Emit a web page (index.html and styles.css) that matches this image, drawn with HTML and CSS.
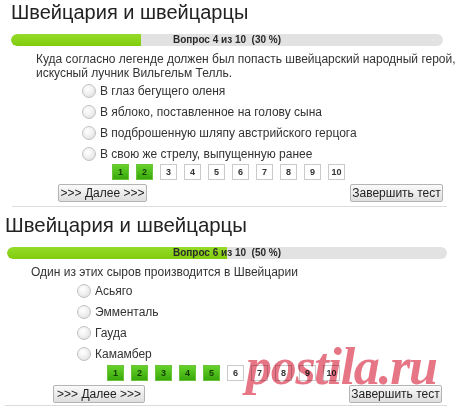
FILE: index.html
```html
<!DOCTYPE html>
<html lang="ru">
<head>
<meta charset="utf-8">
<title>Швейцария и швейцарцы</title>
<link rel="stylesheet" href="styles.css">
</head>
<body>
<div class="page">
  <section class="quiz quiz-a">
    <h1 class="quiz-title">Швейцария и швейцарцы</h1>
    <div class="bar">
      <div class="bar-fill" style="width:30%"></div>
      <div class="bar-label">Вопрос 4 из 10&nbsp;&nbsp;(30 %)</div>
    </div>
    <p class="question">Куда согласно легенде должен был попасть швейцарский народный герой,<br>искусный лучник Вильгельм Телль.</p>
    <ul class="options">
      <li class="option"><span class="radio"></span><span>В глаз бегущего оленя</span></li>
      <li class="option"><span class="radio"></span><span>В яблоко, поставленное на голову сына</span></li>
      <li class="option"><span class="radio"></span><span>В подброшенную шляпу австрийского герцога</span></li>
      <li class="option"><span class="radio"></span><span>В свою же стрелу, выпущенную ранее</span></li>
    </ul>
    <div class="pages">
      <span class="pg done">1</span><span class="pg done">2</span><span class="pg">3</span><span class="pg">4</span><span class="pg">5</span><span class="pg">6</span><span class="pg">7</span><span class="pg">8</span><span class="pg">9</span><span class="pg">10</span>
    </div>
    <div class="actions">
      <button class="btn btn-next">&gt;&gt;&gt; Далее &gt;&gt;&gt;</button>
      <button class="btn btn-finish">Завершить тест</button>
    </div>
    <div class="sep"></div>
  </section>

  <section class="quiz quiz-b">
    <h1 class="quiz-title">Швейцария и швейцарцы</h1>
    <div class="bar">
      <div class="bar-fill" style="width:50%"></div>
      <div class="bar-label">Вопрос 6 из 10&nbsp;&nbsp;(50 %)</div>
    </div>
    <p class="question">Один из этих сыров производится в Швейцарии</p>
    <ul class="options">
      <li class="option"><span class="radio"></span><span>Асьяго</span></li>
      <li class="option"><span class="radio"></span><span>Эмменталь</span></li>
      <li class="option"><span class="radio"></span><span>Гауда</span></li>
      <li class="option"><span class="radio"></span><span>Камамбер</span></li>
    </ul>
    <div class="pages">
      <span class="pg done">1</span><span class="pg done">2</span><span class="pg done">3</span><span class="pg done">4</span><span class="pg done">5</span><span class="pg">6</span><span class="pg">7</span><span class="pg">8</span><span class="pg">9</span><span class="pg">10</span>
    </div>
    <div class="actions">
      <button class="btn btn-next">&gt;&gt;&gt; Далее &gt;&gt;&gt;</button>
      <button class="btn btn-finish">Завершить тест</button>
    </div>
    <div class="sep"></div>
  </section>

  <div class="watermark">postila.ru</div>
</div>
</body>
</html>
```

FILE: styles.css
```css
* { box-sizing: border-box; }
html, body { margin: 0; padding: 0; background: #fff; }
body {
  font-family: "Liberation Sans", Arial, sans-serif;
  color: #333;
  width: 460px;
  height: 408px;
  overflow: hidden;
}
.page { position: relative; width: 460px; height: 408px; background: #fff; }

.quiz-title {
  margin: 0;
  font-weight: normal;
  font-size: 20px;
  line-height: 24px;
  color: #222;
}
.bar {
  position: relative;
  height: 12px;
  border-radius: 6px;
  background: #e2e2e2;
  overflow: hidden;
}
.bar-fill {
  height: 100%;
  background: linear-gradient(#95db2a, #80cc0c);
  border-radius: 6px 0 0 6px;
}
.bar-label {
  position: absolute;
  inset: 0;
  text-align: center;
  font-size: 10px;
  font-weight: bold;
  line-height: 12px;
  color: #2a2a2a;
}
.question {
  margin: 0;
  font-size: 12px;
  line-height: 14px;
  color: #333;
}
.options { list-style: none; margin: 0; padding: 0; }
.option {
  display: flex;
  align-items: center;
  gap: 4px;
  height: 21px;
  font-size: 12px;
  color: #333;
}
.radio {
  width: 14px;
  height: 14px;
  border-radius: 50%;
  border: 1px solid #c2c2c2;
  background: radial-gradient(circle at 40% 35%, #ffffff 0%, #f1f1f1 45%, #d8d8d8 100%);
  flex: none;
}
.pages { display: flex; gap: 7px; height: 16px; }
.pg {
  width: 17px;
  height: 16px;
  border: 1px solid #cacaca;
  background: #fff;
  font-size: 9px;
  font-weight: bold;
  line-height: 14px;
  text-align: center;
  color: #333;
}
.pg.done {
  border-color: #6cc43a;
  background: linear-gradient(#66d22a, #38a80c);
  color: #153d00;
}
.actions { display: flex; justify-content: space-between; }
.btn {
  height: 18px;
  padding: 0;
  font-family: "Liberation Sans", Arial, sans-serif;
  font-size: 12px;
  line-height: 16px;
  color: #222;
  border: 1px solid #b4b4b4;
  border-radius: 2px;
  background: linear-gradient(#fafafa, #dedede);
}
.btn-next { width: 89px; }
.btn-finish { width: 93px; }
.sep { border-top: 1px solid #dcdcdc; }

/* first quiz */
.quiz-a .quiz-title { padding-left: 11px; }
.quiz-a .bar { margin: 10px 17px 0 11px; }
.quiz-a .question { margin-top: 6px; padding-left: 36px; }
.quiz-a .options { padding-left: 82px; }
.quiz-a .pages { padding-left: 112px; }
.quiz-a .actions { margin-top: 4px; padding: 0 17px 0 58px; }
.quiz-a .sep { margin: 4px 13px 0 12px; }

/* second quiz */
.quiz-b { padding-top: 6px; }
.quiz-b .quiz-title { padding-left: 5px; font-size: 20.4px; }
.quiz-b .bar { margin: 10px 13px 0 7px; }
.quiz-b .question { margin-top: 6px; padding-left: 31px; }
.quiz-b .options { margin-top: 1px; padding-left: 77px; }
.quiz-b .pages { margin-top: 1px; padding-left: 107px; }
.quiz-b .actions { margin-top: 4px; padding: 0 18px 0 53px; }
.quiz-b .btn-next { width: 92px; }
.quiz-b .sep { margin: 2px 13px 0 5px; }

.watermark {
  position: absolute;
  left: 246px;
  top: 341px;
  font-family: "Liberation Serif", "Times New Roman", serif;
  font-style: italic;
  font-weight: bold;
  font-size: 52px;
  line-height: 52px;
  letter-spacing: -1.3px;
  color: #e67586;
  mix-blend-mode: multiply;
  pointer-events: none;
}
```
